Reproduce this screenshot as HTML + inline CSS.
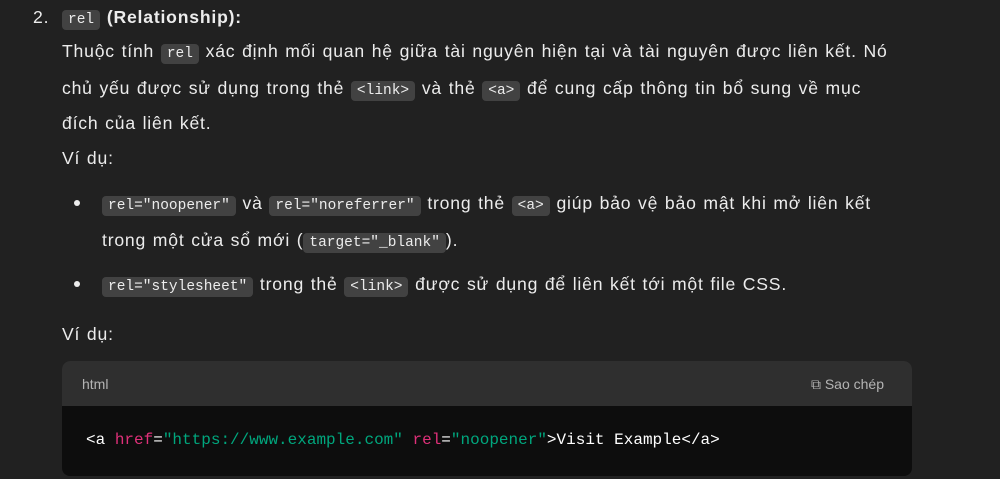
<!DOCTYPE html>
<html><head><meta charset="utf-8"><style>
body{margin:0;background:#212121;color:#ececec;font-family:"Liberation Sans","DejaVu Sans",sans-serif;font-size:17.6px;letter-spacing:0.8px;word-spacing:1px;width:1000px;height:479px;overflow:hidden;position:relative}
.l{position:absolute;white-space:nowrap;line-height:20px}
code{font-family:"Liberation Mono",monospace;font-size:14.5px;letter-spacing:0;word-spacing:0;background:#424242;border-radius:4px;padding:2px 6px;color:#ececec}
.dot{position:absolute;width:6px;height:6px;border-radius:50%;background:#ececec}
.cb{position:absolute;left:62px;top:361px;width:850px;height:115px;border-radius:8px;overflow:hidden;background:#0d0d0d;letter-spacing:0;word-spacing:0}
.hd{height:45px;background:#2f2f2f;font-size:14px;color:#b4b4b4;position:relative}
.k{color:#df3079}.s{color:#00a67d}
</style></head><body>
<div class="l" style="left:33px;top:7px">2.</div>
<div class="l" style="left:62px;top:7px"><code>rel</code> <b>(Relationship):</b></div>
<div class="l" style="left:62px;top:41px">Thuộc tính <code>rel</code> xác định mối quan hệ giữa tài nguyên hiện tại và tài nguyên được liên kết. Nó</div>
<div class="l" style="left:62px;top:78px">chủ yếu được sử dụng trong thẻ <code>&lt;link&gt;</code> và thẻ <code>&lt;a&gt;</code> để cung cấp thông tin bổ sung về mục</div>
<div class="l" style="left:62px;top:113px">đích của liên kết.</div>
<div class="l" style="left:62px;top:148px">Ví dụ:</div>
<div class="dot" style="left:74px;top:200px"></div>
<div class="l" style="left:102px;top:193px"><code>rel="noopener"</code> và <code>rel="noreferrer"</code> trong thẻ <code>&lt;a&gt;</code> giúp bảo vệ bảo mật khi mở liên kết</div>
<div class="l" style="left:102px;top:230px">trong một cửa sổ mới (<code>target="_blank"</code>).</div>
<div class="dot" style="left:74px;top:281px"></div>
<div class="l" style="left:102px;top:274px"><code>rel="stylesheet"</code> trong thẻ <code>&lt;link&gt;</code> được sử dụng để liên kết tới một file CSS.</div>
<div class="l" style="left:62px;top:324px">Ví dụ:</div>
<div class="cb"><div class="hd"><span style="position:absolute;left:20px;top:15px">html</span><span style="position:absolute;right:28px;top:15px">⧉ Sao chép</span></div>
<div style="position:absolute;left:24px;top:70px;font-family:'Liberation Mono',monospace;font-size:16px;color:#fff;white-space:nowrap">&lt;a <span class="k">href</span>=<span class="s">"https://www.example.com"</span> <span class="k">rel</span>=<span class="s">"noopener"</span>&gt;Visit Example&lt;/a&gt;</div></div>
</body></html>
